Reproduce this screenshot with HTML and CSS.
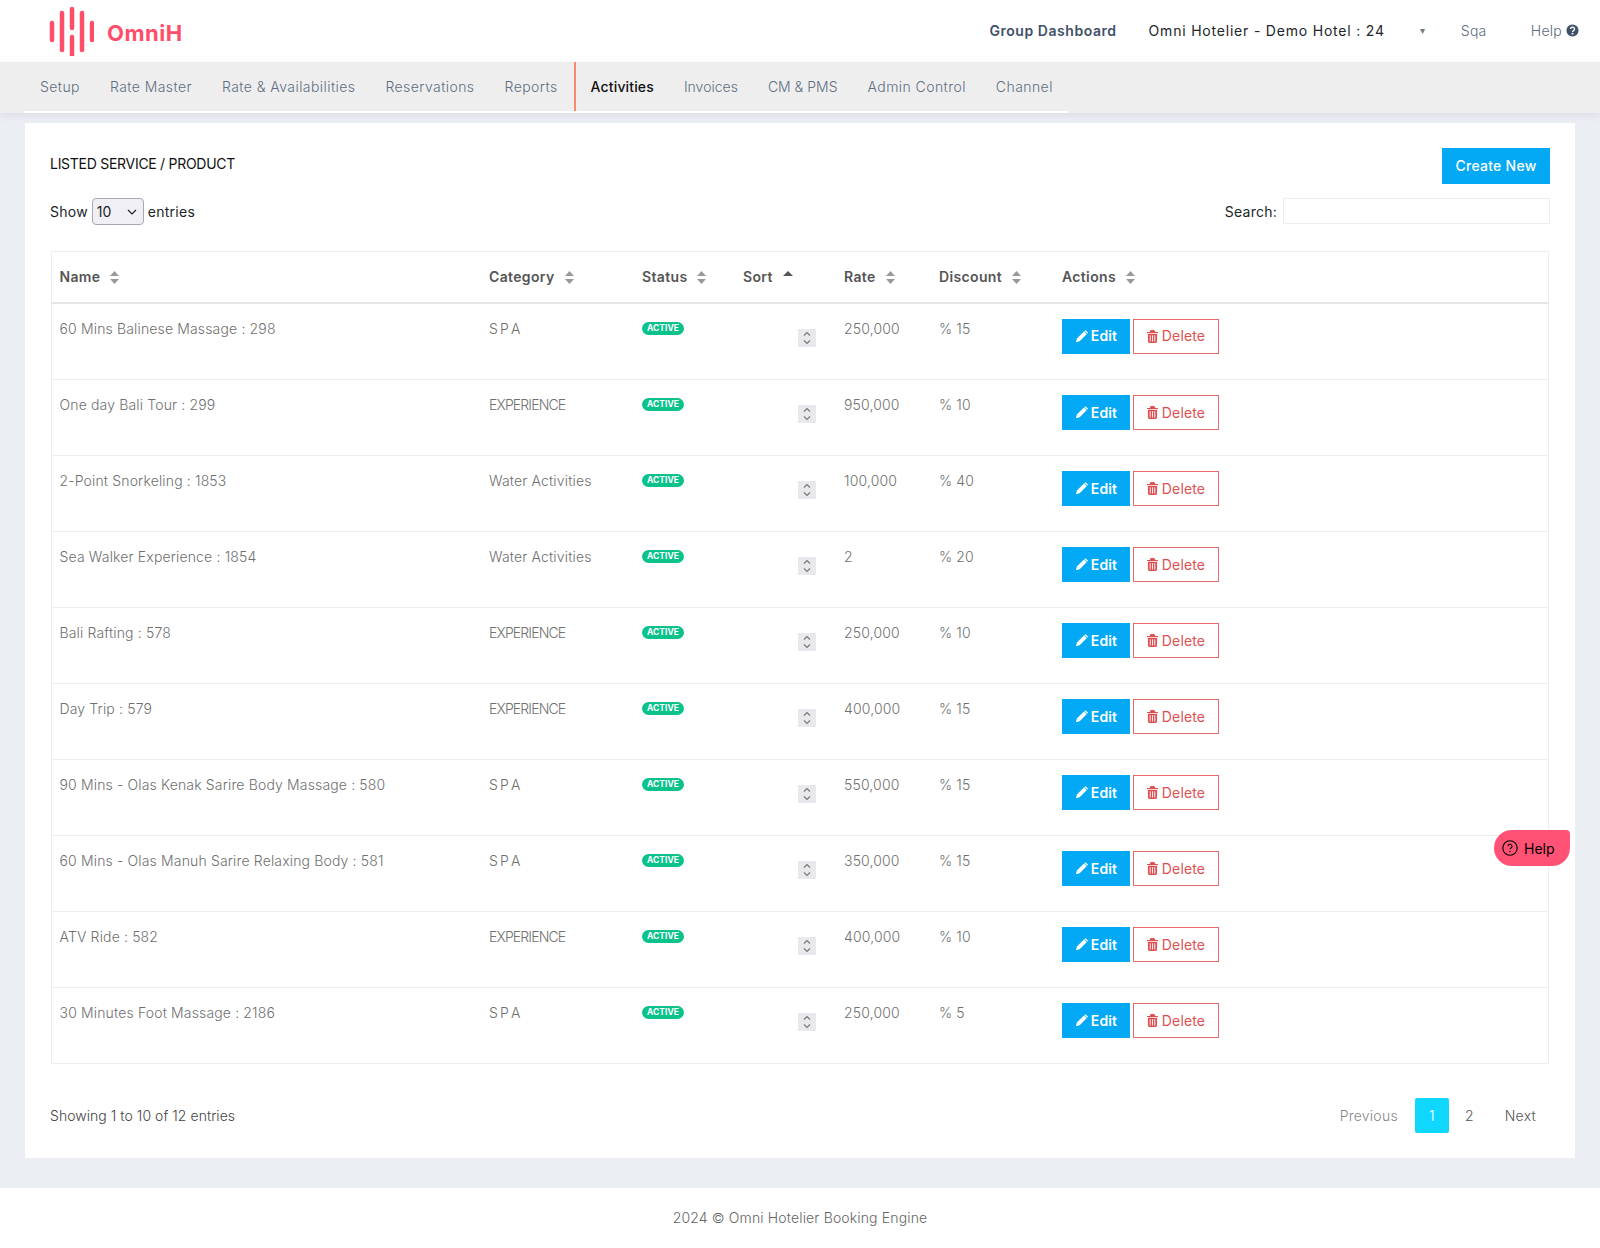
FILE: index.html
```html
<!DOCTYPE html>
<html lang="en">
<head>
<meta charset="utf-8">
<title>Listed Service / Product</title>
<link rel="stylesheet" href="styles.css">
</head>
<body>
<svg class="defs" width="0" height="0" aria-hidden="true">
  <symbol id="pencil" viewBox="0 0 14 14"><path d="M9.600 1.500 12.600 4.500 5 12.100 1 13.100 2 9.100zM10.500.7a1 1 0 0 1 1.400 0l1.500 1.500a1 1 0 0 1 0 1.400l-.4.400-3-3z" fill="currentColor"/></symbol>
  <symbol id="trash" viewBox="0 0 12 14"><path d="M4 0h4l1 2h3v1.300H0V2h3zM1 4h10v8.500A1.500 1.500 0 0 1 9.500 14h-7A1.500 1.500 0 0 1 1 12.500zm2 1.500V12.500h1V5.500zm2.500 0V12.500h1V5.500zm2.500 0V12.500h1V5.500z" fill="currentColor" fill-rule="evenodd"/></symbol>
  <symbol id="sort" viewBox="0 0 9 13"><path d="M4.500 0 9 5H0zM0 8h9l-4.500 5z" fill="currentColor"/></symbol>
  <symbol id="spin" viewBox="0 0 10 18"><path d="M2 6.500 5 3.500l3 3M2 11.500l3 3 3-3" fill="none" stroke="currentColor" stroke-width="1.100"/></symbol>
</svg>

<header class="topbar">
  <a class="logo">
    <svg class="logo-mark" viewBox="0 0 46 50" aria-hidden="true">
      <g stroke="#ff4d6a" stroke-width="4.500" stroke-linecap="round">
        <path d="M4 17V34"/><path d="M14 7V44"/><path d="M24 3V22"/><path d="M24 31V49"/><path d="M34 7V44"/><path d="M44 17V34"/>
      </g>
    </svg>
    <span class="logo-text">OmniH</span>
  </a>
  <nav class="top-links">
    <a class="group-link">Group Dashboard</a>
    <a class="hotel-link">Omni Hotelier - Demo Hotel : 24</a>
    <span class="caret">▾</span>
    <a class="user-link">Sqa</a>
    <a class="help-link">Help
      <svg class="help-icon" viewBox="0 0 14 14" aria-hidden="true"><circle cx="7" cy="7" r="6.500" fill="currentColor"/><path d="M4.800 5.300a2.200 2 0 1 1 3.300 1.800c-.8.500-1.100.8-1.100 1.500" fill="none" stroke="#fff" stroke-width="1.500"/><rect x="6.100" y="9.600" width="1.800" height="1.700" fill="#fff"/></svg>
    </a>
  </nav>
</header>

<div class="menubar">
  <ul class="menu">
    <li><a>Setup</a></li>
    <li><a>Rate Master</a></li>
    <li><a>Rate &amp; Availabilities</a></li>
    <li><a>Reservations</a></li>
    <li><a>Reports</a></li>
    <li class="active"><a>Activities</a></li>
    <li class="tight"><a>Invoices</a></li>
    <li class="tight"><a>CM &amp; PMS</a></li>
    <li><a>Admin Control</a></li>
    <li><a>Channel</a></li>
  </ul>
</div>

<main class="page">
  <section class="card">
    <div class="card-head">
      <h1 class="title">LISTED SERVICE / PRODUCT</h1>
      <a class="btn-create">Create New</a>
    </div>
    <div class="controls">
      <label class="length">Show
        <select class="length-select"><option>10</option></select>
        entries</label>
      <label class="search">Search: <input class="search-input" type="text"></label>
    </div>
    <table class="grid">
      <colgroup>
        <col class="c-name"><col class="c-cat"><col class="c-status"><col class="c-sort"><col class="c-rate"><col class="c-disc"><col class="c-act">
      </colgroup>
      <thead>
        <tr>
          <th>Name<svg class="sort"><use href="#sort"/></svg></th>
          <th>Category<svg class="sort"><use href="#sort"/></svg></th>
          <th>Status<svg class="sort"><use href="#sort"/></svg></th>
          <th>Sort<span class="sort-up"></span></th>
          <th>Rate<svg class="sort"><use href="#sort"/></svg></th>
          <th>Discount<svg class="sort"><use href="#sort"/></svg></th>
          <th>Actions<svg class="sort"><use href="#sort"/></svg></th>
        </tr>
      </thead>
      <tbody>
        <tr><td>60 Mins Balinese Massage : 298</td><td class="caps">S P A</td><td><span class="badge">ACTIVE</span></td><td class="sort-cell"><span class="spin"><svg><use href="#spin"/></svg></span></td><td>250,000</td><td>% 15</td><td class="acts"><div class="act-row"><a class="btn-edit"><svg class="ic"><use href="#pencil"/></svg>Edit</a><a class="btn-del"><svg class="ic-t"><use href="#trash"/></svg>Delete</a></div></td></tr>
        <tr><td>One day Bali Tour : 299</td><td class="caps">EXPERIENCE</td><td><span class="badge">ACTIVE</span></td><td class="sort-cell"><span class="spin"><svg><use href="#spin"/></svg></span></td><td>950,000</td><td>% 10</td><td class="acts"><div class="act-row"><a class="btn-edit"><svg class="ic"><use href="#pencil"/></svg>Edit</a><a class="btn-del"><svg class="ic-t"><use href="#trash"/></svg>Delete</a></div></td></tr>
        <tr><td>2-Point Snorkeling : 1853</td><td>Water Activities</td><td><span class="badge">ACTIVE</span></td><td class="sort-cell"><span class="spin"><svg><use href="#spin"/></svg></span></td><td>100,000</td><td>% 40</td><td class="acts"><div class="act-row"><a class="btn-edit"><svg class="ic"><use href="#pencil"/></svg>Edit</a><a class="btn-del"><svg class="ic-t"><use href="#trash"/></svg>Delete</a></div></td></tr>
        <tr><td>Sea Walker Experience : 1854</td><td>Water Activities</td><td><span class="badge">ACTIVE</span></td><td class="sort-cell"><span class="spin"><svg><use href="#spin"/></svg></span></td><td>2</td><td>% 20</td><td class="acts"><div class="act-row"><a class="btn-edit"><svg class="ic"><use href="#pencil"/></svg>Edit</a><a class="btn-del"><svg class="ic-t"><use href="#trash"/></svg>Delete</a></div></td></tr>
        <tr><td>Bali Rafting : 578</td><td class="caps">EXPERIENCE</td><td><span class="badge">ACTIVE</span></td><td class="sort-cell"><span class="spin"><svg><use href="#spin"/></svg></span></td><td>250,000</td><td>% 10</td><td class="acts"><div class="act-row"><a class="btn-edit"><svg class="ic"><use href="#pencil"/></svg>Edit</a><a class="btn-del"><svg class="ic-t"><use href="#trash"/></svg>Delete</a></div></td></tr>
        <tr><td>Day Trip : 579</td><td class="caps">EXPERIENCE</td><td><span class="badge">ACTIVE</span></td><td class="sort-cell"><span class="spin"><svg><use href="#spin"/></svg></span></td><td>400,000</td><td>% 15</td><td class="acts"><div class="act-row"><a class="btn-edit"><svg class="ic"><use href="#pencil"/></svg>Edit</a><a class="btn-del"><svg class="ic-t"><use href="#trash"/></svg>Delete</a></div></td></tr>
        <tr><td>90 Mins - Olas Kenak Sarire Body Massage : 580</td><td class="caps">S P A</td><td><span class="badge">ACTIVE</span></td><td class="sort-cell"><span class="spin"><svg><use href="#spin"/></svg></span></td><td>550,000</td><td>% 15</td><td class="acts"><div class="act-row"><a class="btn-edit"><svg class="ic"><use href="#pencil"/></svg>Edit</a><a class="btn-del"><svg class="ic-t"><use href="#trash"/></svg>Delete</a></div></td></tr>
        <tr><td>60 Mins - Olas Manuh Sarire Relaxing Body : 581</td><td class="caps">S P A</td><td><span class="badge">ACTIVE</span></td><td class="sort-cell"><span class="spin"><svg><use href="#spin"/></svg></span></td><td>350,000</td><td>% 15</td><td class="acts"><div class="act-row"><a class="btn-edit"><svg class="ic"><use href="#pencil"/></svg>Edit</a><a class="btn-del"><svg class="ic-t"><use href="#trash"/></svg>Delete</a></div></td></tr>
        <tr><td>ATV Ride : 582</td><td class="caps">EXPERIENCE</td><td><span class="badge">ACTIVE</span></td><td class="sort-cell"><span class="spin"><svg><use href="#spin"/></svg></span></td><td>400,000</td><td>% 10</td><td class="acts"><div class="act-row"><a class="btn-edit"><svg class="ic"><use href="#pencil"/></svg>Edit</a><a class="btn-del"><svg class="ic-t"><use href="#trash"/></svg>Delete</a></div></td></tr>
        <tr><td>30 Minutes Foot Massage : 2186</td><td class="caps">S P A</td><td><span class="badge">ACTIVE</span></td><td class="sort-cell"><span class="spin"><svg><use href="#spin"/></svg></span></td><td>250,000</td><td>% 5</td><td class="acts"><div class="act-row"><a class="btn-edit"><svg class="ic"><use href="#pencil"/></svg>Edit</a><a class="btn-del"><svg class="ic-t"><use href="#trash"/></svg>Delete</a></div></td></tr>
      </tbody>
    </table>
    <div class="table-foot">
      <div class="info">Showing 1 to 10 of 12 entries</div>
      <div class="pager">
        <a class="pg pg-prev">Previous</a>
        <a class="pg pg-cur">1</a>
        <a class="pg pg-two">2</a>
        <a class="pg">Next</a>
      </div>
    </div>
  </section>
</main>

<footer class="footer">2024 © Omni Hotelier Booking Engine</footer>

<a class="help-float">
  <svg class="help-float-ic" viewBox="0 0 16 16" aria-hidden="true"><circle cx="8" cy="8" r="7.200" fill="none" stroke="#000" stroke-width="1.100"/><path d="M6 6.300a2 2 0 1 1 3 1.700c-.7.400-1 .7-1 1.300" fill="none" stroke="#000" stroke-width="1.100"/><circle cx="8" cy="11.500" r=".7"/></svg>
  Help
</a>
</body>
</html>
```
FILE: styles.css
```css
* { box-sizing: border-box; }
html, body { margin: 0; padding: 0; }
body {
  background: #ebeef3;
  font-family: Inter, "Open Sans", sans-serif;
  font-size: 14px;
  font-weight: 300;
  color: #6c757d;
  letter-spacing: .25px;
}
a { color: inherit; text-decoration: none; }
.defs { position: absolute; }

.topbar {
  height: 62px;
  background: #fff;
  display: flex;
  align-items: center;
  justify-content: space-between;
  padding: 0 21px 0 48px;
}
.logo { display: flex; align-items: center; }
.logo-mark { width: 46px; height: 50px; display: block; }
.logo-text {
  margin: 4px 0 0 13px;
  font-weight: 700;
  font-size: 22px;
  letter-spacing: .5px;
  color: #ff4d6a;
}
.top-links { display: flex; align-items: center; height: 100%; padding-bottom: 2px; }
.group-link { font-weight: 600; color: #3f5169; letter-spacing: .55px; white-space: nowrap; }
.hotel-link { margin-left: 32px; width: 238px; white-space: nowrap; font-weight: 400; color: #212529; letter-spacing: .8px; }
.caret { margin-left: 33px; font-size: 10px; color: #777; }
.user-link { margin-left: 36px; color: #5c6b80; width: 27px; }
.help-link { margin-left: 43px; color: #5c6b80; display: flex; align-items: center; gap: 4px; }
.help-icon { width: 13px; height: 13px; color: #3f5169; }

.menubar {
  height: 51px;
  background: #eee;
  padding-left: 24px;
  box-shadow: 0 2px 8px rgba(90, 100, 120, .12);
  position: relative;
}
.menu {
  list-style: none;
  margin: 0;
  padding: 0 0 0 1px;
  display: inline-flex;
  height: 51px;
  border-bottom: 2px solid #fff;
  letter-spacing: .43px;
}
.menu li { display: flex; align-items: center; padding: 0 15px; color: #5f6e82; white-space: nowrap; }
.menu .active { border-left: 2px solid #f98a6c; color: #111; font-weight: 500; margin-left: 1px; letter-spacing: .15px; }
.menu .tight { letter-spacing: 0; }

.page { padding: 10px 25px 30px; }
.card { background: #fff; padding: 25px; height: 1035px; }
.card-head { display: flex; justify-content: space-between; align-items: flex-start; height: 36px; }
.title { margin: 6px 0 0; font-size: 14px; font-weight: 400; color: #111; letter-spacing: -.28px; line-height: 20px; }
.btn-create {
  width: 108px; height: 36px;
  padding-bottom: 2px;
  background: #03a9f4;
  color: #fff;
  font-weight: 500;
  display: flex; align-items: center; justify-content: center;
}
.controls { display: flex; justify-content: space-between; align-items: center; margin-top: 13px; height: 28px; color: #212529; font-weight: 400; }
.length { display: flex; align-items: center; gap: 4px; }
.length-select {
  appearance: none;
  width: 52px; height: 27px;
  margin-top: 1px;
  padding-left: 4px;
  border: 1px solid #a9a9b5;
  border-radius: 4px;
  background: #efeff4 url("data:image/svg+xml,%3Csvg xmlns='http://www.w3.org/2000/svg' width='10' height='6'%3E%3Cpath d='M1 1l4 4 4-4' fill='none' stroke='%23222' stroke-width='1.200'/%3E%3C/svg%3E") no-repeat right 6px center;
  font-family: inherit;
  font-size: 14px;
  color: #212529;
}
.search { display: flex; align-items: center; gap: 6px; }
.search-input { width: 267px; height: 26px; border: 1px solid #eee; background: #fff; }

.grid {
  margin: 26px 1px 0;
  width: 1498px;
  table-layout: fixed;
  border-collapse: collapse;
  border: 1px solid #eee;
}
.c-name { width: 430px; }
.c-cat { width: 153px; }
.c-status { width: 101px; }
.c-sort { width: 101px; }
.c-rate { width: 95px; }
.c-disc { width: 123px; }
.grid th {
  height: 51px;
  padding: 0 8px 0 7.500px;
  text-align: left;
  font-weight: 600;
  color: #555;
  letter-spacing: .35px;
  border-bottom: 2px solid #e6e6e6;
}
.sort { width: 9px; height: 13px; margin-left: 10px; color: #999; vertical-align: -2px; }
.sort-up {
  display: inline-block;
  margin-left: 10px;
  border-left: 5px solid transparent;
  border-right: 5px solid transparent;
  border-bottom: 5px solid #555;
  vertical-align: 6px;
}
.grid td {
  height: 76px;
  padding: 15px 8px 0 7.500px;
  vertical-align: top;
  line-height: 20px;
  border-bottom: 1px solid #eee;
  color: #707070;
  letter-spacing: .15px;
}
.grid tbody tr:first-child td { height: 77px; }
.grid .caps { letter-spacing: -.85px; }
.badge {
  display: block;
  width: 42px;
  height: 13px;
  margin-top: 3px;
  border-radius: 7px;
  background: #0cc28c;
  color: #fff;
  font-size: 8.500px;
  font-weight: 700;
  line-height: 13px;
  text-align: center;
  letter-spacing: 0;
}
.grid .sort-cell { padding-top: 25px; }
.spin {
  display: block;
  width: 18px;
  height: 18px;
  margin-left: 55px;
  background: #e9e9ed;
  color: #777;
}
.spin svg { width: 18px; height: 18px; display: block; }
.act-row { display: flex; gap: 3px; }
.btn-edit, .btn-del {
  height: 35px;
  display: flex;
  align-items: center;
  justify-content: center;
}
.btn-edit { width: 68px; background: #03a9f4; color: #fff; font-weight: 600; }
.btn-del { width: 86px; background: #fff; color: #e05050; border: 1px solid #e86a6a; font-weight: 400; }
.ic { width: 13px; height: 13px; margin-right: 3px; }
.ic-t { width: 11px; height: 13px; margin-right: 4px; }

.table-foot { display: flex; justify-content: space-between; align-items: center; margin-top: 34px; height: 35px; }
.info { color: #444; letter-spacing: .05px; padding-bottom: 1px; }
.pager { display: flex; align-items: center; height: 35px; }
.pg { padding: 0 14px; color: #555; }
.pg-prev { color: #888; padding-right: 17px; }
.pg-cur {
  width: 34px; height: 35px; padding: 0;
  background: #10d7ff;
  border-radius: 2px;
  color: #fff;
  display: flex; align-items: center; justify-content: center;
}
.pg-two { padding-left: 16px; padding-right: 17px; }

.footer { height: 60px; padding-bottom: 2px; background: #fff; display: flex; align-items: center; justify-content: center; color: #666; letter-spacing: .15px; }

.help-float {
  position: fixed;
  left: 1494px;
  top: 830px;
  width: 76px;
  height: 36px;
  background: #ff5274;
  color: #000;
  border-radius: 18px 4px 18px 18px;
  display: flex;
  align-items: center;
  gap: 6px;
  padding-left: 8px;
  font-weight: 400;
  letter-spacing: 0;
}
.help-float-ic { width: 16px; height: 16px; }
```
